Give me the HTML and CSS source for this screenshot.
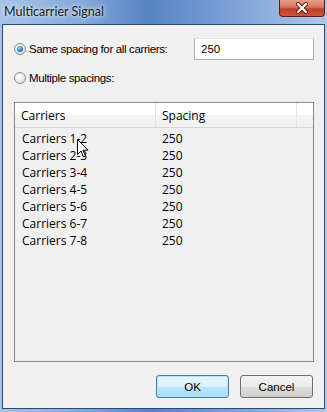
FILE: index.html
```html
<!DOCTYPE html>
<html lang="en">
<head>
    <meta charset="UTF-8">
    <title>Multicarrier Signal</title>
    <link rel="stylesheet" href="styles.css">
</head>
<body>
    <div class="window">
        <div class="titlebar">
            <span class="title">Multicarrier Signal</span>
            <div class="close">
                <svg width="14" height="12" viewBox="0 0 14 12">
                    <path d="M3 2 L11 10 M11 2 L3 10" stroke="#6b1a10" stroke-width="4" stroke-linecap="round"/>
                    <path d="M3 2 L11 10 M11 2 L3 10" stroke="#ffffff" stroke-width="2.2" stroke-linecap="round"/>
                </svg>
            </div>
        </div>
        <div class="client">
            <div class="option first">
                <span class="radio checked"></span>
                <span class="label">Same spacing for all carriers:</span>
                <div class="textbox">250</div>
            </div>
            <div class="option">
                <span class="radio"></span>
                <span class="label">Multiple spacings:</span>
            </div>
            <div class="list">
                <div class="header">
                    <div class="col col-name">Carriers</div>
                    <div class="col col-value">Spacing</div>
                    <div class="col col-fill"></div>
                </div>
                <div class="rows">
                    <div class="row"><span class="cell-name">Carriers 1-2</span><span>250</span></div>
                    <div class="row"><span class="cell-name">Carriers 2-3</span><span>250</span></div>
                    <div class="row"><span class="cell-name">Carriers 3-4</span><span>250</span></div>
                    <div class="row"><span class="cell-name">Carriers 4-5</span><span>250</span></div>
                    <div class="row"><span class="cell-name">Carriers 5-6</span><span>250</span></div>
                    <div class="row"><span class="cell-name">Carriers 6-7</span><span>250</span></div>
                    <div class="row"><span class="cell-name">Carriers 7-8</span><span>250</span></div>
                </div>
            </div>
            <div class="buttons">
                <div class="button default">OK</div>
                <div class="button">Cancel</div>
            </div>
        </div>
        <svg class="cursor" width="12" height="19" viewBox="0 0 12 19">
            <path d="M0.5 0.5 L0.5 15.5 L4 12 L6.5 18 L8.5 17 L6 11.2 L11 11.2 Z" fill="#ffffff" stroke="#000000" stroke-width="1"/>
        </svg>
    </div>
</body>
</html>
```

FILE: styles.css
```css
body {
    margin: 0;
    padding: 0;
    font-family: "Liberation Sans", Arial, sans-serif;
    font-size: 11.5px;
    color: #000;
}

.window {
    position: relative;
    width: 327px;
    height: 412px;
    display: flex;
    flex-direction: column;
    background: linear-gradient(90deg, #a7c3e8 0%, #86a9d9 25%, #5684c4 45%, #7aa0d6 70%, #b0c9ea 100%);
    box-sizing: border-box;
}

.titlebar {
    height: 23px;
    display: flex;
    align-items: flex-start;
    padding-left: 4px;
}

.title {
    margin-top: 4px;
    font-family: "Lato", "Liberation Sans", sans-serif;
    font-size: 12.5px;
    color: #1a1a1a;
    text-shadow: 0 0 6px #d8e6f6, 0 0 3px #e4eef9;
}

.close {
    margin-left: auto;
    margin-right: 2px;
    width: 46px;
    height: 17px;
    box-sizing: border-box;
    border: 1px solid #5a1f1a;
    border-top: none;
    border-radius: 0 0 4px 4px;
    background: linear-gradient(180deg, #e6a08e 0%, #d3765e 45%, #bf3f2a 55%, #cf5539 100%);
    display: flex;
    align-items: center;
    justify-content: center;
}

.client {
    flex: 1;
    margin: 1px 2px 3px 2px;
    background: #f0f0f0;
    border: 1px solid #2d4a72;
    display: flex;
    flex-direction: column;
    padding: 0 10px 10px 10px;
}

.option {
    display: flex;
    align-items: center;
    height: 22px;
    padding-left: 1px;
    letter-spacing: -0.35px;
}

.option.first {
    margin-top: 13px;
    margin-bottom: 7px;
}

.radio {
    width: 12px;
    height: 12px;
    border-radius: 50%;
    border: 1px solid #8e8f8f;
    background: radial-gradient(circle at 40% 35%, #ffffff 0%, #e6e6e6 60%, #c9c9c9 100%);
    box-sizing: border-box;
    margin-right: 3px;
    position: relative;
}

.radio.checked::after {
    content: "";
    position: absolute;
    left: 2px;
    top: 2px;
    width: 6px;
    height: 6px;
    border-radius: 50%;
    background: radial-gradient(circle at 40% 35%, #8fe0ff 0%, #2a8ad4 50%, #0d3f7a 100%);
}

.textbox {
    margin-left: auto;
    width: 120px;
    height: 22px;
    box-sizing: border-box;
    background: #fff;
    border: 1px solid #abadb3;
    border-top-color: #e3e5e8;
    padding: 4px 6px;
    letter-spacing: 0;
}

.list {
    margin-top: 13px;
    margin-left: 1px;
    width: 300px;
    height: 260px;
    box-sizing: border-box;
    border: 1px solid #828790;
    background: #f0f0f0;
    font-family: "Open Sans", "Liberation Sans", sans-serif;
    font-size: 12px;
}

.header {
    display: flex;
    height: 24px;
    background: linear-gradient(180deg, #ffffff 0%, #ffffff 50%, #f3f4f6 51%, #f1f2f4 100%);
    border-bottom: 1px solid #d5d5d5;
}

.col {
    box-sizing: border-box;
    padding: 4px 6px;
    border-right: 1px solid #e3e3e3;
}

.col-name {
    width: 141px;
}

.col-value {
    width: 141px;
}

.col-fill {
    flex: 1;
    border-right: none;
}

.rows {
    padding-top: 2px;
}

.row {
    display: flex;
    height: 17px;
    align-items: center;
    padding-left: 7px;
}

.cell-name {
    width: 140px;
}

.buttons {
    margin-top: auto;
    display: flex;
    justify-content: flex-end;
    gap: 11px;
    padding-right: 1px;
}

.button {
    width: 73px;
    height: 23px;
    box-sizing: border-box;
    border: 1px solid #707070;
    border-radius: 3px;
    background: linear-gradient(180deg, #f2f2f2 0%, #ebebeb 50%, #dddddd 51%, #cfcfcf 100%);
    display: flex;
    align-items: center;
    justify-content: center;
}

.button.default {
    border-color: #3c7fb1;
    box-shadow: inset 0 0 0 1px #b9e4f8;
    background: linear-gradient(180deg, #eaf6fd 0%, #d9f0fc 50%, #bee6fd 51%, #a7d9f5 100%);
}

.cursor {
    position: absolute;
    left: 77px;
    top: 139px;
}
```
